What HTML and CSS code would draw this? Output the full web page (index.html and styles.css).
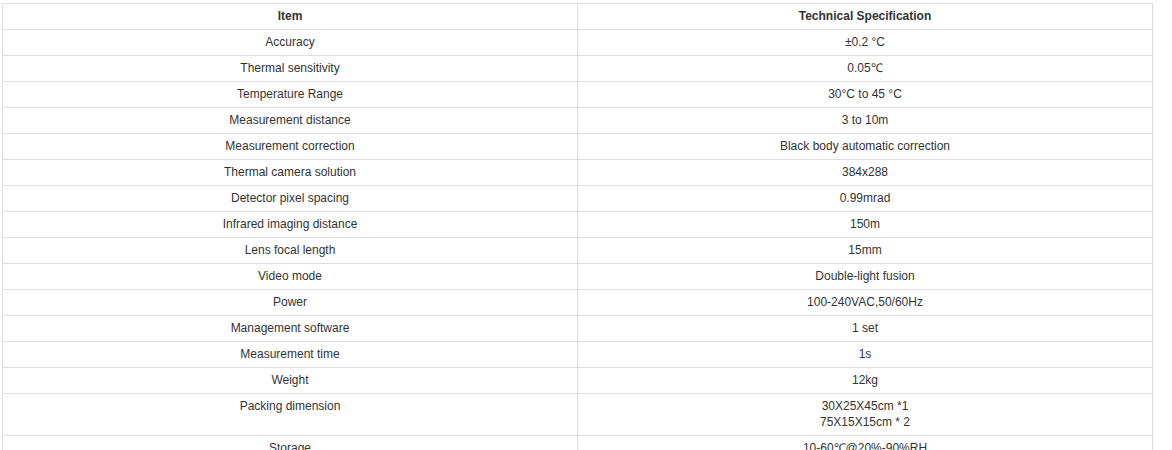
FILE: index.html
```html
<!DOCTYPE html>
<html>
<head>
<meta charset="utf-8">
<link rel="stylesheet" href="styles.css">
</head>
<body>
<div class="wrap">
<table class="spec">
<thead>
<tr><th>Item</th><th>Technical Specification</th></tr>
</thead>
<tbody>
<tr><td>Accuracy</td><td>±0.2 °C</td></tr>
<tr><td>Thermal sensitivity</td><td>0.05℃</td></tr>
<tr><td>Temperature Range</td><td>30°C to 45 °C</td></tr>
<tr><td>Measurement distance</td><td>3 to 10m</td></tr>
<tr><td>Measurement correction</td><td>Black body automatic correction</td></tr>
<tr><td>Thermal camera solution</td><td>384x288</td></tr>
<tr><td>Detector pixel spacing</td><td>0.99mrad</td></tr>
<tr><td>Infrared imaging distance</td><td>150m</td></tr>
<tr><td>Lens focal length</td><td>15mm</td></tr>
<tr><td>Video mode</td><td>Double-light fusion</td></tr>
<tr><td>Power</td><td>100-240VAC,50/60Hz</td></tr>
<tr><td>Management software</td><td>1 set</td></tr>
<tr><td>Measurement time</td><td>1s</td></tr>
<tr><td>Weight</td><td>12kg</td></tr>
<tr><td>Packing dimension</td><td>30X25X45cm *1<br>75X15X15cm * 2</td></tr>
<tr><td>Storage</td><td>10-60℃@20%-90%RH</td></tr>
</tbody>
</table>
</div>
</body>
</html>
```

FILE: styles.css
```css
html, body {
  margin: 0;
  padding: 0;
  background: #fff;
}
.wrap {
  padding: 3px 0 0 2px;
}
.spec {
  width: 1151px;
  border-collapse: collapse;
  table-layout: fixed;
  font-family: "Liberation Sans", Arial, sans-serif;
  font-size: 12px;
  line-height: 16px;
  color: #333;
}
.spec th, .spec td {
  border: 1px solid #ddd;
  text-align: center;
  vertical-align: top;
  padding: 4px 8px 5px;
  width: 50%;
}
.spec th {
  font-weight: bold;
}
```
